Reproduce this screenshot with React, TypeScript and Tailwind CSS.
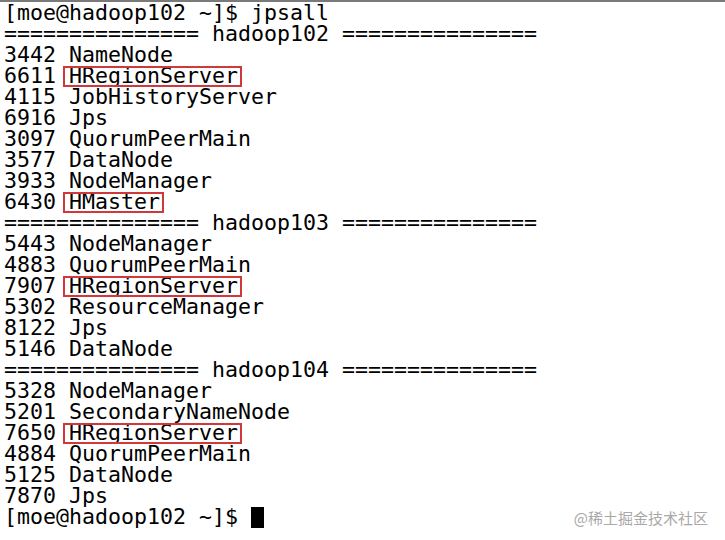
const lines: { text: string; mark?: string }[] = [
  { text: '[moe@hadoop102 ~]$ jpsall' },
  { text: '=============== hadoop102 ===============' },
  { text: '3442 NameNode' },
  { text: '6611 ', mark: 'HRegionServer' },
  { text: '4115 JobHistoryServer' },
  { text: '6916 Jps' },
  { text: '3097 QuorumPeerMain' },
  { text: '3577 DataNode' },
  { text: '3933 NodeManager' },
  { text: '6430 ', mark: 'HMaster' },
  { text: '=============== hadoop103 ===============' },
  { text: '5443 NodeManager' },
  { text: '4883 QuorumPeerMain' },
  { text: '7907 ', mark: 'HRegionServer' },
  { text: '5302 ResourceManager' },
  { text: '8122 Jps' },
  { text: '5146 DataNode' },
  { text: '=============== hadoop104 ===============' },
  { text: '5328 NodeManager' },
  { text: '5201 SecondaryNameNode' },
  { text: '7650 ', mark: 'HRegionServer' },
  { text: '4884 QuorumPeerMain' },
  { text: '5125 DataNode' },
  { text: '7870 Jps' },
]

export default function App() {
  return (
    <div className="w-[725px] h-[540px] bg-white border-t-2 border-[#7a7a7a] overflow-hidden relative">
      <div className="pl-[4px] font-['DejaVu_Sans_Mono',monospace] text-[21.6px] text-black whitespace-pre">
        {lines.map((l, i) => (
          <div key={i} className="h-[21px] leading-[21px]">
            {l.text}
            {l.mark && (
              <span className="relative inline-block">
                {l.mark}
                <span className="absolute left-[-6px] right-[-4px] top-[1px] bottom-[-1px] border-2 border-[#d0393b]" />
              </span>
            )}
          </div>
        ))}
        <div className="h-[21px] leading-[21px] flex items-center">
          <span>[moe@hadoop102 ~]$ </span>
          <span className="inline-block w-[13px] h-[21px] bg-black mt-[1px]" />
        </div>
      </div>
      <div className="absolute right-[17px] bottom-[15px] text-[15px] text-[#a8a8a8] font-['Noto_Sans_CJK_SC',sans-serif] leading-none">
        @稀土掘金技术社区
      </div>
    </div>
  )
}
